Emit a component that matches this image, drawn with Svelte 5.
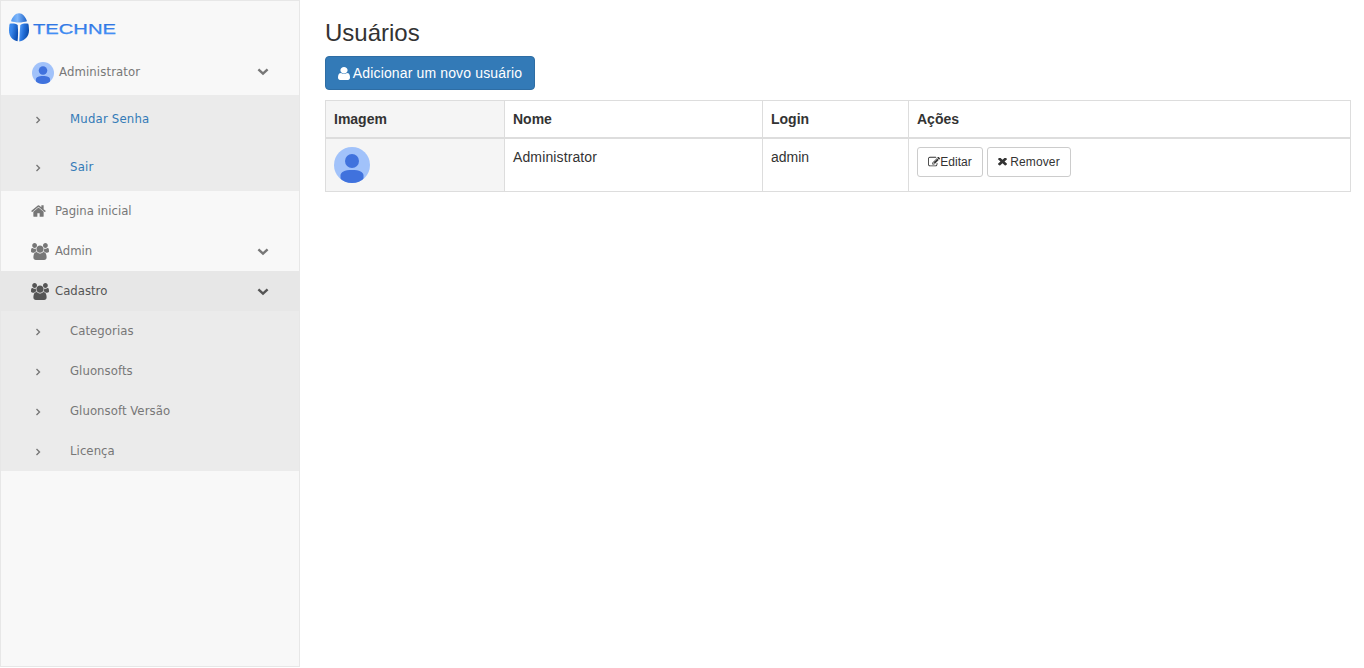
<script>
  const account = ['Mudar Senha', 'Sair'];
  const registry = ['Categorias', 'Gluonsofts', 'Gluonsoft Versão', 'Licença'];
</script>

{#snippet avatar(size)}
  <svg class="avatar" width={size} height={size} viewBox="0 0 36 36">
    <defs><clipPath id="round{size}"><circle cx="18" cy="18" r="18" /></clipPath></defs>
    <g clip-path="url(#round{size})">
      <rect width="36" height="36" fill="#a1c2fa" />
      <circle cx="18" cy="14" r="7" fill="#4072dd" />
      <path d="M6.500 36v-7.500c0-3.500 4-5.500 11.500-5.500s11.500 2 11.500 5.500v7.500z" fill="#4072dd" />
    </g>
  </svg>
{/snippet}

{#snippet chevron()}
  <svg class="chevron" width="12" height="8" viewBox="0 0 12 8"><path d="M1.400 1.400L6 5.700l4.600-4.300" /></svg>
{/snippet}

{#snippet users()}
  <svg class="icon" width="18" height="17" viewBox="-64 0 1920 1792"><path d="M529 896q-162 5-265 128h-134q-82 0-138-40.5t-56-118.5q0-353 124-353 6 0 43.5 21t97.5 42.5 119 21.5q67 0 133-23-5 37-5 66 0 139 81 256zm1071 637q0 120-73 189.5t-194 69.5h-874q-121 0-194-69.5t-73-189.5q0-53 3.5-103.5t14-109 26.5-108.5 43-97.5 62-81 85.5-53.5 111.5-20q10 0 43 21.5t73 48 107 48 135 21.5 135-21.5 107-48 73-48 43-21.5q61 0 111.5 20t85.5 53.5 62 81 43 97.5 26.5 108.5 14 109 3.5 103.5zm-1024-1277q0 106-75 181t-181 75-181-75-75-181 75-181 181-75 181 75 75 181zm704 384q0 159-112.5 271.5t-271.5 112.5-271.5-112.5-112.5-271.5 112.5-271.5 271.5-112.5 271.5 112.5 112.5 271.5zm576 225q0 78-56 118.5t-138 40.5h-134q-103-123-265-128 81-117 81-256 0-29-5-66 66 23 133 23 59 0 119-21.5t97.5-42.5 43.5-21q124 0 124 353zm-128-609q0 106-75 181t-181 75-181-75-75-181 75-181 181-75 181 75 75 181z" /></svg>
{/snippet}

{#snippet submenu(items, kind)}
  <ul class="sub {kind}">
    {#each items as item}
      <li>
        <svg class="arrow" width="6" height="8" viewBox="0 0 6 8"><path d="M1.500 1l3 3-3 3" /></svg>
        <span>{item}</span>
      </li>
    {/each}
  </ul>
{/snippet}

<div class="page">
  <nav class="sidebar">
    <div class="brand">
      <svg width="110" height="32" viewBox="0 0 110 32">
        <defs>
          <linearGradient id="shell" x1="0" x2="1"><stop offset="0" stop-color="#4f97f0" /><stop offset=".4" stop-color="#7fb6fa" /><stop offset="1" stop-color="#1c62c8" /></linearGradient>
          <linearGradient id="left" x1="0" x2="1" y2=".4"><stop offset="0" stop-color="#3f8df0" /><stop offset=".4" stop-color="#3583e8" /><stop offset="1" stop-color="#0d50b4" /></linearGradient>
          <linearGradient id="right" x1="0" x2="1" y2=".3"><stop offset="0" stop-color="#5fa6fa" /><stop offset=".5" stop-color="#2672dc" /><stop offset="1" stop-color="#0b4cab" /></linearGradient>
          <linearGradient id="word" x1="0" y1="0" x2="0" y2="1"><stop offset="0" stop-color="#2468d8" /><stop offset="1" stop-color="#4a9bff" /></linearGradient>
        </defs>
        <path fill="url(#shell)" d="M3 9.200C4.500 4.500 7.500 1.200 11 1.200s6.500 3.300 8 8C16.500 9.800 14 10.500 11 10.500S5.500 9.800 3 9.200z" />
        <path fill="url(#left)" d="M1.700 11.800c2.800-.5 5.800-.2 8 1.100.5 5.400.5 11-.1 16.400C4.400 28.500 1 24.200 1 18.500c0-2.300.2-4.800.7-6.700z" />
        <path fill="url(#right)" d="M20.300 11.800c-2.800-.5-5.800-.2-8 1.100-.5 5.400-.9 11-1.100 16.500C17 28.600 21 24.200 21 18.500c0-2.300-.2-4.800-.7-6.700z" />
        <text x="25" y="21.800" textLength="83" lengthAdjust="spacingAndGlyphs" fill="url(#word)">TECHNE</text>
      </svg>
    </div>
    <div class="profile">{@render avatar(22)}<span>Administrator</span>{@render chevron()}</div>
    {@render submenu(account, 'links')}
    <div class="item home">
      <svg class="icon" width="17" height="16" viewBox="0 0 1792 1792"><path d="M1472 992v480q0 26-19 45t-45 19h-384v-384h-256v384h-384q-26 0-45-19t-19-45v-480q0-1 .5-3t.5-3l575-474 575 474q1 2 1 6zm223-69l-62 74q-8 9-21 11h-3q-13 0-21-7l-692-577-692 577q-12 8-24 7-13-2-21-11l-62-74q-8-10-7-23.5t11-21.500l719-599q32-26 76-26t76 26l244 204v-195q0-14 9-23t23-9h192q14 0 23 9t9 23v408l219 182q10 8 11 21.500t-7 23.500z" /></svg>
      <span>Pagina inicial</span>
    </div>
    <div class="item group">{@render users()}<span>Admin</span>{@render chevron()}</div>
    <div class="item group active">{@render users()}<span>Cadastro</span>{@render chevron()}</div>
    {@render submenu(registry, 'plain')}
  </nav>

  <main>
    <h3>Usuários</h3>
    <button class="primary">
      <svg width="12" height="13" viewBox="256 128 1280 1536" preserveAspectRatio="none"><path d="M1536 1399q0 109-62.5 187t-150.5 78h-854q-88 0-150.5-78t-62.5-187q0-85 8.5-160.5t31.5-152 58.5-131 94-89 134.5-34.5q131 128 313 128t313-128q76 0 134.5 34.5t94 89 58.5 131 31.5 152 8.5 160.5zm-256-887q0 159-112.5 271.5t-271.5 112.5-271.5-112.5-112.5-271.5 112.5-271.5 271.5-112.5 271.5 112.5 112.5 271.5z" /></svg>
      <span>Adicionar um novo usuário</span>
    </button>
    <table>
      <colgroup><col class="c1" /><col class="c2" /><col class="c3" /><col /></colgroup>
      <thead><tr><th class="shade">Imagem</th><th>Nome</th><th>Login</th><th>Ações</th></tr></thead>
      <tbody>
        <tr>
          <td class="shade">{@render avatar(36)}</td>
          <td class="name">Administrator</td>
          <td>admin</td>
          <td>
            <div class="actions">
              <button class="small edit">
                <svg width="12" height="12" viewBox="0 0 1792 1792"><path d="M888 1184l116-116-152-152-116 116v56h96v96h56zm440-720q-16-16-33 1l-350 350q-17 17-1 33t33-1l350-350q17-17 1-33zm80 594v190q0 119-84.5 203.5t-203.5 84.5h-832q-119 0-203.5-84.5t-84.5-203.5v-832q0-119 84.5-203.5t203.5-84.5h832q63 0 117 25 15 7 18 23 3 17-9 29l-49 49q-14 14-32 8-23-6-45-6h-832q-66 0-113 47t-47 113v832q0 66 47 113t113 47h832q66 0 113-47t47-113v-126q0-13 9-22l64-64q15-15 35-7t20 29zm-96-738l288 288-672 672h-288v-288zm444 132l-92 92-288-288 92-92q28-28 68-28t68 28l152 152q28 28 28 68t-28 68z" /></svg>
                <span>Editar</span>
              </button>
              <button class="small remove">
                <svg width="9" height="8" viewBox="302 434 1188 1188" preserveAspectRatio="none"><path d="M1490 1322q0 40-28 68l-136 136q-28 28-68 28t-68-28l-294-294-294 294q-28 28-68 28t-68-28l-136-136q-28-28-28-68t28-68l294-294-294-294q-28-28-28-68t28-68l136-136q28-28 68-28t68 28l294 294 294-294q28-28 68-28t68 28l136 136q28 28 28 68t-28 68l-294 294 294 294q28 28 28 68z" /></svg>
                <span>Remover</span>
              </button>
            </div>
          </td>
        </tr>
      </tbody>
    </table>
  </main>
</div>

<style>
  :global(body) { margin: 0; background: #fff; overflow: hidden; }
  * { box-sizing: border-box; }
  .page { display: flex; height: 668px; color: #333; font: 14px/20px "Liberation Sans", Arial, sans-serif; }
  svg { display: block; flex: none; fill: currentColor; }
  .sidebar { width: 300px; height: 667px; flex: none; border: 1px solid #e7e7e7; background: #f8f8f8; color: #777; font: 13px/20px "DejaVu Sans Condensed", Tahoma, sans-serif; }
  .brand { height: 50px; padding: 11px 0 0 7px; }
  .brand text { font: 14.5px "Liberation Sans", Arial, sans-serif; stroke: #3b82ea; stroke-width: .25; }
  .profile { display: flex; height: 44px; padding: 0 30px 3px 31px; align-items: center; }
  .profile span { margin-left: 5px; letter-spacing: .12px; }
  .profile .avatar { margin-top: 2px; }
  .chevron { margin-left: auto; fill: none; stroke: currentColor; stroke-width: 2.4; }
  .item { display: flex; height: 40px; padding: 0 30px; align-items: center; }
  .item .chevron { margin-top: 1px; }
  .item span { margin-left: 7px; }
  .item.group span { margin-left: 6px; }
  .home svg { margin-left: -1px; margin-right: 1px; }
  .active { background: #e7e7e7; color: #555; }
  .sub { margin: 0; padding: 0; list-style: none; background: #ebebeb; }
  .sub li { display: flex; height: 40px; padding-left: 34px; align-items: center; }
  .sub span { margin-left: 29px; letter-spacing: .06px; }
  .links li { height: 48px; }
  .links span { color: #337ab7; letter-spacing: .2px; }
  .arrow { margin-top: 2px; fill: none; stroke: #777; stroke-width: 1.4; }
  main { flex: 1; padding: 20px 13px 0 25px; }
  h3 { margin: 0 0 10px; font-size: 24px; font-weight: 400; line-height: 26px; }
  button { display: flex; align-items: center; justify-content: center; padding: 0; font-family: inherit; }
  .primary { width: 210px; height: 34px; gap: 3px; border: 1px solid #2e6da4; border-radius: 4px; background: #337ab7; color: #fff; font-size: 14px; letter-spacing: .14px; }
  table { width: 1026px; margin-top: 10px; table-layout: fixed; border-collapse: collapse; border: 1px solid #ddd; }
  .c1 { width: 179px; }
  .c2 { width: 258px; }
  .c3 { width: 146px; }
  th, td { padding: 8px; border: 1px solid #ddd; text-align: left; vertical-align: top; }
  th { border-bottom-width: 2px; }
  .name { letter-spacing: .12px; }
  .shade { background: #f5f5f5; }
  .actions { display: flex; gap: 4px; }
  .small { height: 30px; border: 1px solid #ccc; border-radius: 3px; background: #fff; color: #333; font-size: 12px; }
  .edit { width: 66px; }
  .remove { width: 84px; gap: 3px; letter-spacing: .14px; }
</style>
